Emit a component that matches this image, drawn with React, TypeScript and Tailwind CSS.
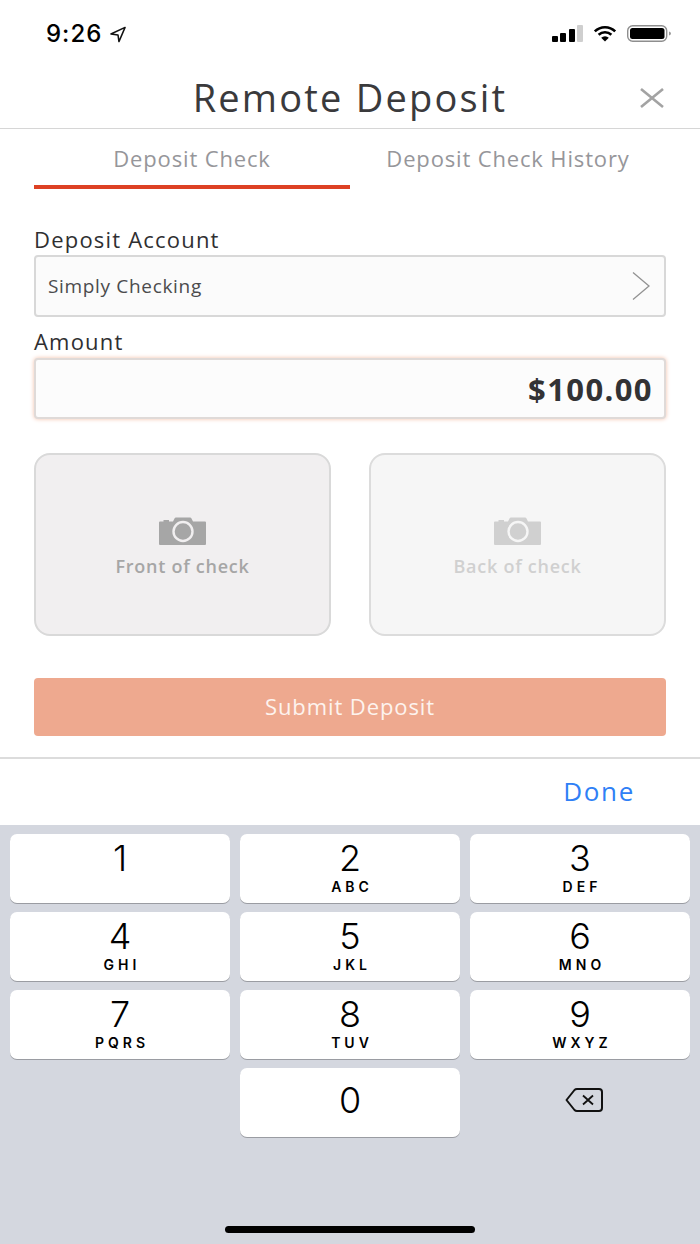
const keys = [
  { n: "1", l: "" },
  { n: "2", l: "ABC" },
  { n: "3", l: "DEF" },
  { n: "4", l: "GHI" },
  { n: "5", l: "JKL" },
  { n: "6", l: "MNO" },
  { n: "7", l: "PQRS" },
  { n: "8", l: "TUV" },
  { n: "9", l: "WXYZ" },
];

const CameraIcon = ({ className, lens }: { className: string; lens: string }) => (
  <svg viewBox="0 0 48 28" className={className}>
    <path
      fill="currentColor"
      d="M1 4.500h3.500V3h5.500v1.500h4l1.500-3q.4-1 1.500-1h14q1.100 0 1.500 1l1.500 3h12q1 0 1 1v21.500q0 1-1 1H1q-1 0-1-1V5.500q0-1 1-1z"
    />
    <circle cx="24" cy="14.500" r="9.500" fill="none" stroke={lens} strokeWidth="2.400" />
  </svg>
);

const Key = ({ n, l }: { n: string; l: string }) => (
  <button
    type="button"
    className="flex h-[69px] flex-col items-center rounded-[7px] bg-white pt-[2px] font-['Inter',sans-serif] text-black shadow-[0_1px_0_#9a9ca2]"
  >
    <span className="text-[36px] leading-[44px] font-light">{n}</span>
    {l && (
      <span className="pl-[4px] text-[14px] leading-[14px] font-semibold tracking-[4px]">
        {l}
      </span>
    )}
  </button>
);

export default function App() {
  return (
    <div className="flex h-[1244px] w-[700px] flex-col overflow-hidden bg-white font-['Open_Sans',sans-serif]">
      {/* status bar */}
      <div className="flex h-[68px] items-start justify-between pt-[20px] pr-[28px] pl-[46px]">
        <div className="flex items-center gap-[7px]">
          <span className="font-['Inter',sans-serif] text-[24px] leading-[28px] font-medium tracking-[1px] text-black">
            9:26
          </span>
          <svg viewBox="0 0 18 18" className="h-[17px] w-[18px]">
            <path d="M16.500 1.500 1.500 8.500l7.500 1 1 7z" fill="none" stroke="#111" strokeWidth="1.600" strokeLinejoin="round" />
          </svg>
        </div>
        <div className="flex items-center gap-[9px] pt-[5px]">
          <svg viewBox="0 0 31 17" className="h-[17px] w-[31px]">
            <rect x="0" y="11" width="6" height="6" rx="1" fill="#000" />
            <rect x="8" y="8" width="6" height="9" rx="1" fill="#000" />
            <rect x="17" y="4" width="6" height="13" rx="1" fill="#000" />
            <rect x="25" y="0" width="6" height="17" rx="1" fill="#cfcfcf" />
          </svg>
          <svg viewBox="0 0 28 20" className="h-[17px] w-[26px]">
            <path d="M2 7.500a17 17 0 0 1 24 0" fill="none" stroke="#000" strokeWidth="3" />
            <path d="M6.500 11.500a11 11 0 0 1 15 0" fill="none" stroke="#000" strokeWidth="3" />
            <path d="M14 19.500 9.500 15a6.500 6.500 0 0 1 9 0z" fill="#000" />
          </svg>
          <svg viewBox="0 0 45 17" className="h-[17px] w-[45px]">
            <rect x="0.700" y="0.700" width="39" height="15.600" rx="5" fill="none" stroke="#8e8e8e" strokeWidth="1.400" />
            <rect x="3" y="3" width="34.500" height="11" rx="2.500" fill="#000" />
            <path d="M42 6.500q2 .6 2 2t-2 2z" fill="#9a9a9a" />
          </svg>
        </div>
      </div>

      {/* header */}
      <div className="relative h-[61px] border-b border-[#d6d6d6] pt-[7px] text-center">
        <h1 className="text-[38px] leading-[44px] font-normal tracking-[2.2px] text-[#3a3a3c]">
          Remote Deposit
        </h1>
        <svg
          viewBox="0 0 24 20"
          className="absolute top-[20px] right-[36px] h-[20px] w-[24px] text-[#a3a3a3]"
        >
          <path d="M1 1 23 19M23 1 1 19" fill="none" stroke="currentColor" strokeWidth="2.600" />
        </svg>
      </div>

      {/* tabs */}
      <div className="grid grid-cols-2 px-[34px] text-[22px] tracking-[0.85px] text-[#96969a]">
        <div className="h-[60px] border-b-[4px] border-[#dd4124] pt-[14px] text-center leading-[30px]">
          Deposit Check
        </div>
        <div className="h-[60px] pt-[14px] text-center leading-[30px]">
          Deposit Check History
        </div>
      </div>

      {/* form */}
      <div className="flex flex-col px-[34px] pt-[37px]">
        <label className="text-[22px] leading-[27px] font-medium tracking-[1.2px] text-[#2f2f31]">
          Deposit Account
        </label>
        <div className="mt-[2px] flex h-[62px] items-center justify-between rounded-[4px] border-2 border-[#d8d8d8] bg-[#fbfbfb] pr-[14px] pl-[12px]">
          <span className="text-[19px] tracking-[0.67px] text-[#4b4b4d]">
            Simply Checking
          </span>
          <svg viewBox="0 0 18 28" className="h-[28px] w-[18px]">
            <path d="M1 0.500 17 14 1 27.500" fill="none" stroke="#929292" strokeWidth="1.300" />
          </svg>
        </div>
        <label className="mt-[11px] text-[22px] leading-[27px] font-medium tracking-[1.2px] text-[#2f2f31]">
          Amount
        </label>
        <div className="mt-[3px] flex h-[61px] items-center justify-end rounded-[4px] border-2 border-[#dfdad8] bg-[#fcfcfc] pt-[2px] pr-[11px] shadow-[0_0_4px_#f3bfa9]">
          <span className="text-[31px] font-bold tracking-[1.4px] text-[#323234]">
            $100.00
          </span>
        </div>

        <div className="mt-[34px] grid grid-cols-2 gap-[38px]">
          <div className="flex h-[183px] flex-col items-center rounded-[16px] border-2 border-[#d9d9d9] bg-[#f1eff0] pt-[62px] text-[#a6a6a6]">
            <CameraIcon className="h-[28px] w-[48px]" lens="#f1eff0" />
            <span className="mt-[9px] text-[18px] leading-[24px] font-semibold tracking-[0.75px]">
              Front of check
            </span>
          </div>
          <div className="flex h-[183px] flex-col items-center rounded-[16px] border-2 border-[#dcdcdc] bg-[#f6f6f6] pt-[62px] text-[#d0d0d0]">
            <CameraIcon className="h-[28px] w-[48px]" lens="#f6f6f6" />
            <span className="mt-[9px] text-[18px] leading-[24px] font-semibold tracking-[0.75px]">
              Back of check
            </span>
          </div>
        </div>

        <button
          type="button"
          className="mt-[42px] h-[58px] rounded-[4px] bg-[#eea98f] pb-[2px] text-[22px] tracking-[0.9px] text-[#fdf3ee]"
        >
          Submit Deposit
        </button>
      </div>

      {/* keyboard toolbar */}
      <div className="mt-[21px] flex h-[68px] items-center justify-end border-t-2 border-[#dcdcdc] pr-[65px] pb-[2px]">
        <span className="text-[26px] tracking-[1.7px] text-[#2f80f6]">Done</span>
      </div>

      {/* keyboard */}
      <div className="relative flex-1 bg-[#d4d7df] px-[10px] pt-[9px]">
        <div className="grid grid-cols-3 gap-x-[10px] gap-y-[9px]">
          {keys.map((k) => (
            <Key key={k.n} n={k.n} l={k.l} />
          ))}
          <div />
          <button
            type="button"
            className="flex h-[69px] items-center justify-center rounded-[7px] bg-white pb-[6px] font-['Inter',sans-serif] text-[36px] font-light text-black shadow-[0_1px_0_#9a9ca2]"
          >
            0
          </button>
          <div className="flex h-[69px] items-center justify-center pb-[6px] pl-[8px]">
            <svg viewBox="0 0 38 24" className="h-[24px] w-[38px]">
              <path
                d="M12 1h22q3 0 3 3v16q0 3-3 3H12q-1.500 0-2.500-1L1.500 12l8-10q1-1 2.500-1z"
                fill="none"
                stroke="#111"
                strokeWidth="2"
                strokeLinejoin="round"
              />
              <path d="M18 7.500 28 16.500M28 7.500 18 16.500" fill="none" stroke="#111" strokeWidth="1.800" />
            </svg>
          </div>
        </div>
        <div className="absolute bottom-[11px] left-[225px] h-[7px] w-[250px] rounded-full bg-black" />
      </div>
    </div>
  );
}
